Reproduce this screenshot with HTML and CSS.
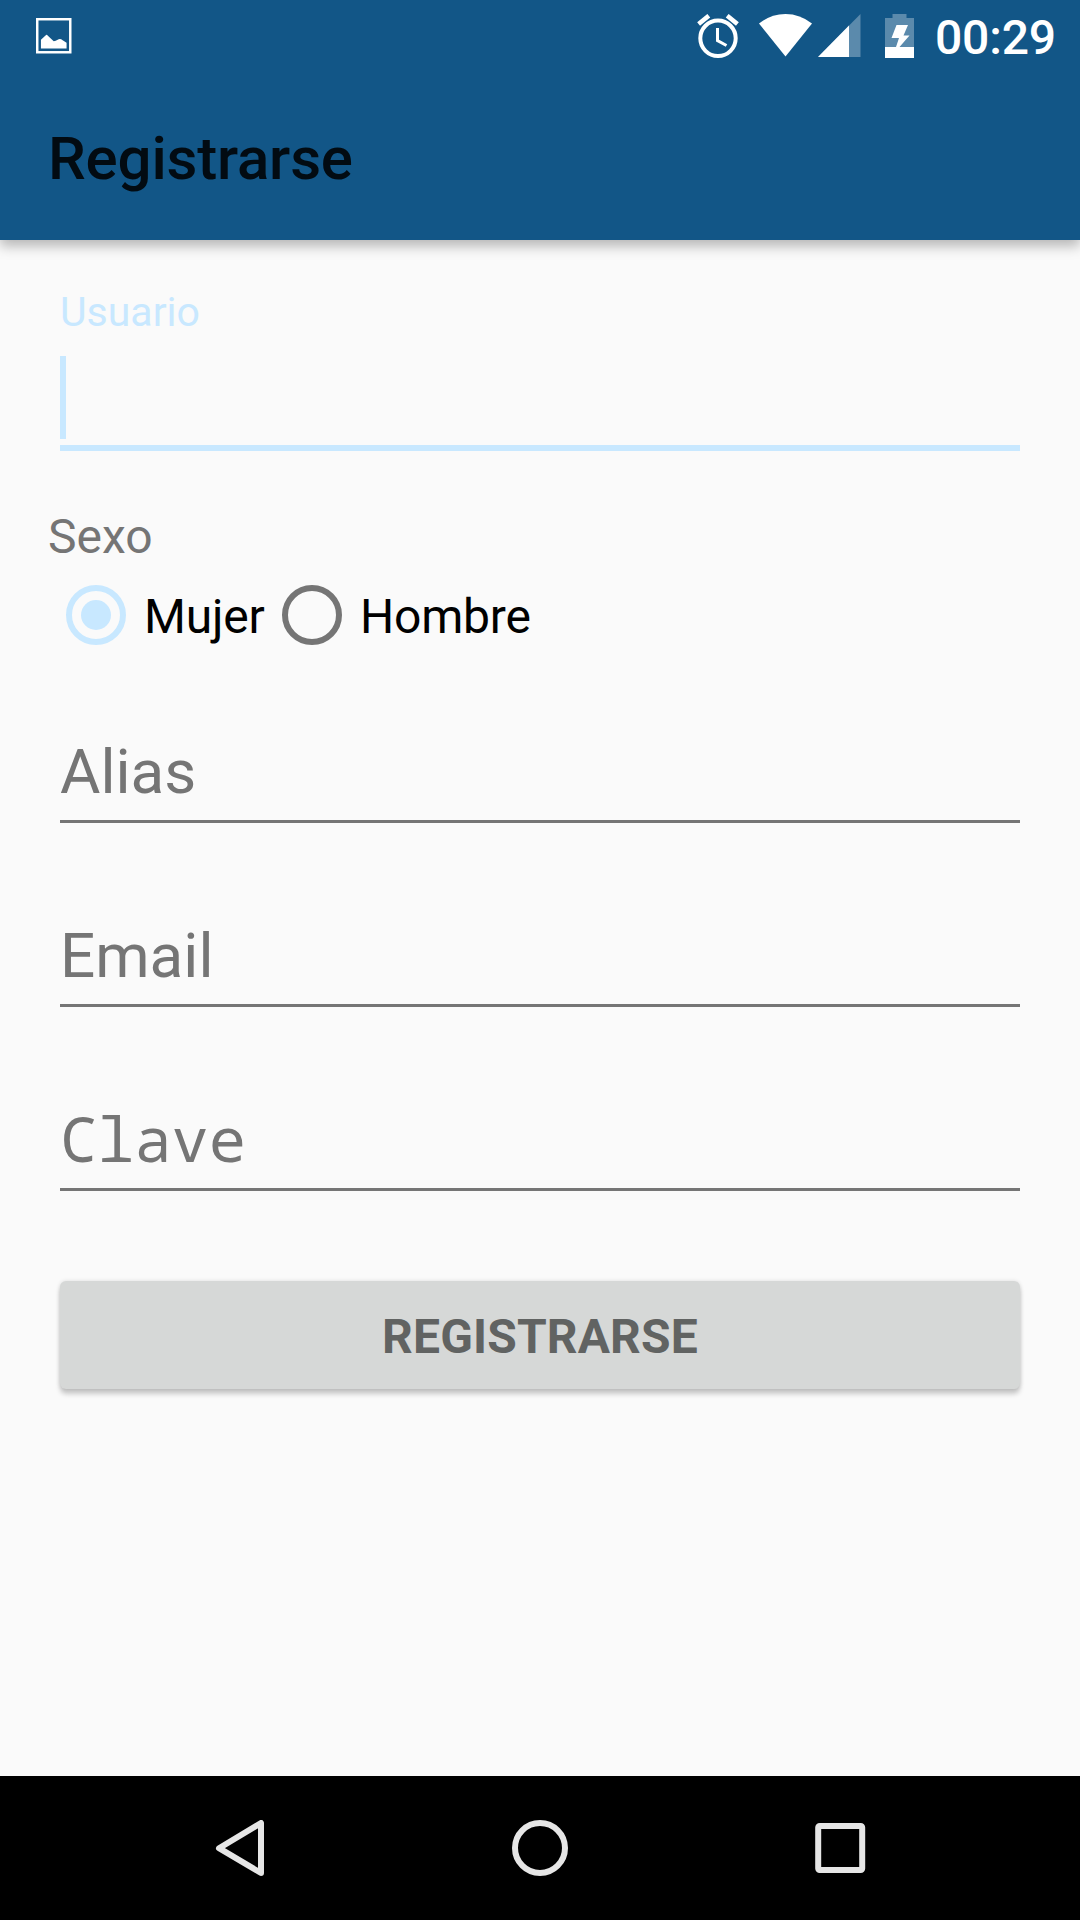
FILE: index.html
```html
<!DOCTYPE html>
<html lang="es">
<head>
<meta charset="utf-8">
<title>Registrarse</title>
<link rel="stylesheet" href="styles.css">
</head>
<body>
<div class="screen">
  <header class="header">
    <div class="status-bar">
      <svg class="icon-picture" width="35.500" height="35.500" viewBox="0 0 36 36"><rect x="1.250" y="1.250" width="33.500" height="33.500" fill="none" stroke="#fff" stroke-width="2.500"/><path fill="#fff" d="M5 31V22L10.500 17Q11.500 17 12 18L18 23.500Q20 23.500 22 22Q24.500 20.500 27 22.500L31 25V31Z"/></svg>
      <svg class="icon-alarm" width="42" height="44" viewBox="0 0 42 44"><circle cx="21" cy="24.300" r="17.700" fill="none" stroke="#fff" stroke-width="4"/><path fill="none" stroke="#fff" stroke-width="3" d="M20.500 14V26.500L29.500 31.500"/><path fill="none" stroke="#fff" stroke-width="4.500" d="M1.600 10L11.800 1.700M40.400 10L30.200 1.700"/></svg>
      <svg class="icon-wifi" width="54" height="43" viewBox="0 0 54 43"><path fill="#fff" d="M0 9.500Q12 0 26.500 0T53 9.500L26.500 42.500Z"/></svg>
      <svg class="icon-signal" width="43" height="43" viewBox="0 0 43 43"><path fill="#fff" fill-opacity=".31" d="M0 43L42.500 0V43Z"/><path fill="#fff" d="M0 43L31 11.500V43Z"/></svg>
      <svg class="icon-battery" width="29" height="44" viewBox="0 0 29 44"><path fill="#fff" fill-opacity=".31" d="M7.500 0H21.500V4H29V33H0V4H7.500Z"/><path fill="#fff" d="M0 33H11L14 24H6.500L11.500 11H23L18.500 21.500H24.500L14.500 33H29V44H0Z"/></svg>
      <span class="clock">00:29</span>
    </div>
    <h1 class="title">Registrarse</h1>
  </header>
  <main class="form">
    <div class="field field-active">
      <span class="label">Usuario</span>
      <span class="cursor"></span>
    </div>
    <div class="group-label">Sexo</div>
    <div class="radios">
      <div class="radio"><span class="ring ring-on"></span><span class="radio-text">Mujer</span></div>
      <div class="radio"><span class="ring"></span><span class="radio-text">Hombre</span></div>
    </div>
    <div class="fields">
      <div class="field">Alias</div>
      <div class="field">Email</div>
      <div class="field field-mono">Clave</div>
    </div>
    <button class="submit" type="button">REGISTRARSE</button>
  </main>
  <nav class="nav-bar">
    <svg width="56" height="56" viewBox="0 0 56 56"><path fill="none" stroke="#e6e6e6" stroke-width="6" stroke-linejoin="round" d="M49 3V53L7 28.200Z"/></svg>
    <svg width="56" height="56" viewBox="0 0 56 56"><circle cx="28" cy="28" r="25" fill="none" stroke="#e6e6e6" stroke-width="6"/></svg>
    <svg width="56" height="56" viewBox="0 0 56 56"><rect x="6.200" y="6" width="44" height="44" rx="1.500" fill="none" stroke="#e6e6e6" stroke-width="6"/></svg>
  </nav>
</div>
</body>
</html>
```
FILE: styles.css
```css
* { box-sizing: border-box; }

body {
  margin: 0;
  font-family: Roboto, "Liberation Sans", sans-serif;
  background: #fafafa;
}

.screen {
  width: 1080px;
  height: 1920px;
  display: flex;
  flex-direction: column;
}

.header {
  height: 240px;
  background: #125687;
  box-shadow: 0 6px 12px rgba(0, 0, 0, .28);
}

.status-bar {
  height: 72px;
  display: flex;
  align-items: flex-start;
  padding: 14px 24px 0 36px;
}

.icon-picture { margin-top: 4px; }
.icon-alarm { margin-left: auto; }
.icon-wifi { margin-left: 20px; }
.icon-signal { margin-left: 5px; }
.icon-battery { margin-left: 24px; }

.clock {
  margin-left: 21px;
  font-size: 48px;
  line-height: 48px;
  font-weight: 500;
  letter-spacing: -.15px;
  color: #fff;
}

.title {
  margin: 0;
  padding: 44px 48px 0;
  font-size: 60px;
  line-height: 85px;
  font-weight: 500;
  letter-spacing: -.18px;
  color: #020b12;
}

.form {
  flex: 1;
  padding: 47px 48px 0;
}

.field {
  margin: 0 12px;
  padding-bottom: 13px;
  border-bottom: 3px solid #757575;
  font-size: 62px;
  line-height: 70px;
  color: #757575;
}

.field-active {
  display: flex;
  flex-direction: column;
  gap: 18px;
  padding-bottom: 6px;
  border-bottom: 6px solid #c8e8ff;
}

.label {
  font-size: 41px;
  line-height: 51px;
  color: #c8e8ff;
}

.cursor {
  width: 6px;
  height: 83px;
  background: #c8e8ff;
}

.group-label {
  margin-top: 58px;
  font-size: 48px;
  line-height: 56px;
  color: #757575;
}

.radios {
  display: flex;
  margin-top: 20px;
  padding-left: 18px;
}

.radio {
  display: flex;
  gap: 18px;
  width: 216px;
}

.ring {
  flex: none;
  display: grid;
  place-items: center;
  width: 60px;
  height: 60px;
  border: 6px solid #757575;
  border-radius: 50%;
}

.ring-on { border-color: #c8e8ff; }

.ring-on::after {
  content: "";
  width: 30px;
  height: 30px;
  border-radius: 50%;
  background: #c8e8ff;
}

.radio-text {
  padding-top: 3px;
  font-size: 48px;
  line-height: 57px;
  letter-spacing: -.2px;
  color: #000;
}

.fields {
  display: flex;
  flex-direction: column;
  gap: 98px;
  margin-top: 92px;
}

.field-mono {
  padding-bottom: 17px;
  line-height: 66px;
  font-family: "Droid Sans Mono", "Noto Sans Mono", "Liberation Mono", monospace;
}

.submit {
  display: block;
  width: 960px;
  height: 108px;
  margin: 90px 12px 0;
  padding: 3px 0 0;
  border: 0;
  border-radius: 6px;
  background: #d6d8d7;
  box-shadow: 0 5px 5px rgba(0, 0, 0, .2), 0 0 4px rgba(0, 0, 0, .12);
  font: 700 48px/56px Roboto, "Liberation Sans", sans-serif;
  letter-spacing: .15px;
  color: #616362;
}

.nav-bar {
  height: 144px;
  display: flex;
  justify-content: space-between;
  align-items: center;
  padding: 0 212px;
  background: #000;
}
```
